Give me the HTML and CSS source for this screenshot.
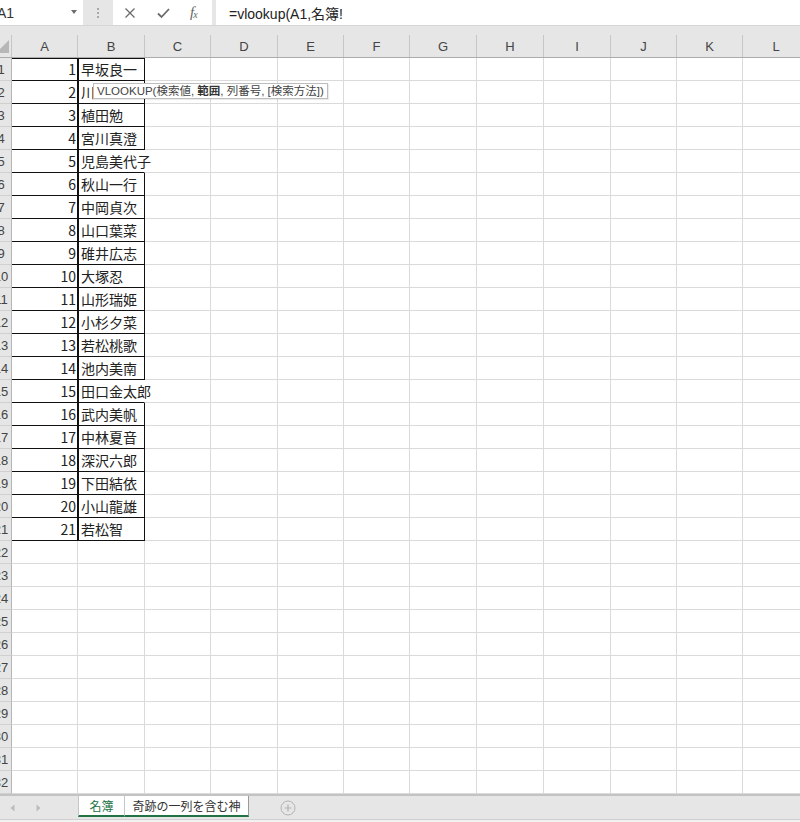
FILE: index.html
```html
<!DOCTYPE html>
<html lang="ja">
<head>
<meta charset="utf-8">
<title>名簿</title>
<link rel="stylesheet" href="styles.css">
</head>
<body>
<div class="fbar">
  <div class="namebox"><span class="ref">A1</span><span class="caret"></span></div>
  <div class="grip"><span></span><span></span><span></span></div>
  <div class="fx-icons">
    <svg class="ico" width="12" height="12" viewBox="0 0 12 12"><path d="M1.5 1.5 L10.5 10.5 M10.5 1.5 L1.5 10.5" stroke="#6b6b6b" stroke-width="1.3" fill="none"/></svg>
    <svg class="ico" width="13" height="12" viewBox="0 0 13 12"><path d="M1 6.5 L4.5 10 L12 2" stroke="#6b6b6b" stroke-width="1.8" fill="none"/></svg>
    <span class="fx"><i>f</i><sub>x</sub></span>
  </div>
  <div class="formula">=vlookup(A1,名簿!</div>
</div>
<div class="band"></div>
<div class="sheet">
  <div class="row head">
    <div class="corner"><svg width="12" height="22" viewBox="0 0 12 22"><polygon points="9,5 9,18 -4,18" fill="#b7b7b7"/></svg></div>
    <div class="ch">A</div><div class="ch">B</div><div class="ch">C</div><div class="ch">D</div><div class="ch">E</div><div class="ch">F</div><div class="ch">G</div><div class="ch">H</div><div class="ch">I</div><div class="ch">J</div><div class="ch">K</div><div class="ch">L</div>
  </div>
  <div class="row"><div class="rh"><span>1</span></div><div class="c num b first">1</div><div class="c name b first">早坂良一</div><div class="c"></div><div class="c"></div><div class="c"></div><div class="c"></div><div class="c"></div><div class="c"></div><div class="c"></div><div class="c"></div><div class="c"></div><div class="c"></div></div>
  <div class="row"><div class="rh"><span>2</span></div><div class="c num b">2</div><div class="c name b">川</div><div class="c"></div><div class="c"></div><div class="c"></div><div class="c"></div><div class="c"></div><div class="c"></div><div class="c"></div><div class="c"></div><div class="c"></div><div class="c"></div></div>
  <div class="row"><div class="rh"><span>3</span></div><div class="c num b">3</div><div class="c name b">植田勉</div><div class="c"></div><div class="c"></div><div class="c"></div><div class="c"></div><div class="c"></div><div class="c"></div><div class="c"></div><div class="c"></div><div class="c"></div><div class="c"></div></div>
  <div class="row"><div class="rh"><span>4</span></div><div class="c num b">4</div><div class="c name b">宮川真澄</div><div class="c"></div><div class="c"></div><div class="c"></div><div class="c"></div><div class="c"></div><div class="c"></div><div class="c"></div><div class="c"></div><div class="c"></div><div class="c"></div></div>
  <div class="row"><div class="rh"><span>5</span></div><div class="c num b">5</div><div class="c name b over">児島美代子</div><div class="c"></div><div class="c"></div><div class="c"></div><div class="c"></div><div class="c"></div><div class="c"></div><div class="c"></div><div class="c"></div><div class="c"></div><div class="c"></div></div>
  <div class="row"><div class="rh"><span>6</span></div><div class="c num b">6</div><div class="c name b">秋山一行</div><div class="c"></div><div class="c"></div><div class="c"></div><div class="c"></div><div class="c"></div><div class="c"></div><div class="c"></div><div class="c"></div><div class="c"></div><div class="c"></div></div>
  <div class="row"><div class="rh"><span>7</span></div><div class="c num b">7</div><div class="c name b">中岡貞次</div><div class="c"></div><div class="c"></div><div class="c"></div><div class="c"></div><div class="c"></div><div class="c"></div><div class="c"></div><div class="c"></div><div class="c"></div><div class="c"></div></div>
  <div class="row"><div class="rh"><span>8</span></div><div class="c num b">8</div><div class="c name b">山口葉菜</div><div class="c"></div><div class="c"></div><div class="c"></div><div class="c"></div><div class="c"></div><div class="c"></div><div class="c"></div><div class="c"></div><div class="c"></div><div class="c"></div></div>
  <div class="row"><div class="rh"><span>9</span></div><div class="c num b">9</div><div class="c name b">碓井広志</div><div class="c"></div><div class="c"></div><div class="c"></div><div class="c"></div><div class="c"></div><div class="c"></div><div class="c"></div><div class="c"></div><div class="c"></div><div class="c"></div></div>
  <div class="row"><div class="rh"><span>10</span></div><div class="c num b">10</div><div class="c name b">大塚忍</div><div class="c"></div><div class="c"></div><div class="c"></div><div class="c"></div><div class="c"></div><div class="c"></div><div class="c"></div><div class="c"></div><div class="c"></div><div class="c"></div></div>
  <div class="row"><div class="rh"><span>11</span></div><div class="c num b">11</div><div class="c name b">山形瑞姫</div><div class="c"></div><div class="c"></div><div class="c"></div><div class="c"></div><div class="c"></div><div class="c"></div><div class="c"></div><div class="c"></div><div class="c"></div><div class="c"></div></div>
  <div class="row"><div class="rh"><span>12</span></div><div class="c num b">12</div><div class="c name b">小杉夕菜</div><div class="c"></div><div class="c"></div><div class="c"></div><div class="c"></div><div class="c"></div><div class="c"></div><div class="c"></div><div class="c"></div><div class="c"></div><div class="c"></div></div>
  <div class="row"><div class="rh"><span>13</span></div><div class="c num b">13</div><div class="c name b">若松桃歌</div><div class="c"></div><div class="c"></div><div class="c"></div><div class="c"></div><div class="c"></div><div class="c"></div><div class="c"></div><div class="c"></div><div class="c"></div><div class="c"></div></div>
  <div class="row"><div class="rh"><span>14</span></div><div class="c num b">14</div><div class="c name b">池内美南</div><div class="c"></div><div class="c"></div><div class="c"></div><div class="c"></div><div class="c"></div><div class="c"></div><div class="c"></div><div class="c"></div><div class="c"></div><div class="c"></div></div>
  <div class="row"><div class="rh"><span>15</span></div><div class="c num b">15</div><div class="c name b over">田口金太郎</div><div class="c"></div><div class="c"></div><div class="c"></div><div class="c"></div><div class="c"></div><div class="c"></div><div class="c"></div><div class="c"></div><div class="c"></div><div class="c"></div></div>
  <div class="row"><div class="rh"><span>16</span></div><div class="c num b">16</div><div class="c name b">武内美帆</div><div class="c"></div><div class="c"></div><div class="c"></div><div class="c"></div><div class="c"></div><div class="c"></div><div class="c"></div><div class="c"></div><div class="c"></div><div class="c"></div></div>
  <div class="row"><div class="rh"><span>17</span></div><div class="c num b">17</div><div class="c name b">中林夏音</div><div class="c"></div><div class="c"></div><div class="c"></div><div class="c"></div><div class="c"></div><div class="c"></div><div class="c"></div><div class="c"></div><div class="c"></div><div class="c"></div></div>
  <div class="row"><div class="rh"><span>18</span></div><div class="c num b">18</div><div class="c name b">深沢六郎</div><div class="c"></div><div class="c"></div><div class="c"></div><div class="c"></div><div class="c"></div><div class="c"></div><div class="c"></div><div class="c"></div><div class="c"></div><div class="c"></div></div>
  <div class="row"><div class="rh"><span>19</span></div><div class="c num b">19</div><div class="c name b">下田結依</div><div class="c"></div><div class="c"></div><div class="c"></div><div class="c"></div><div class="c"></div><div class="c"></div><div class="c"></div><div class="c"></div><div class="c"></div><div class="c"></div></div>
  <div class="row"><div class="rh"><span>20</span></div><div class="c num b">20</div><div class="c name b">小山龍雄</div><div class="c"></div><div class="c"></div><div class="c"></div><div class="c"></div><div class="c"></div><div class="c"></div><div class="c"></div><div class="c"></div><div class="c"></div><div class="c"></div></div>
  <div class="row"><div class="rh"><span>21</span></div><div class="c num b">21</div><div class="c name b">若松智</div><div class="c"></div><div class="c"></div><div class="c"></div><div class="c"></div><div class="c"></div><div class="c"></div><div class="c"></div><div class="c"></div><div class="c"></div><div class="c"></div></div>
  <div class="row"><div class="rh"><span>22</span></div><div class="c"></div><div class="c"></div><div class="c"></div><div class="c"></div><div class="c"></div><div class="c"></div><div class="c"></div><div class="c"></div><div class="c"></div><div class="c"></div><div class="c"></div><div class="c"></div></div>
  <div class="row"><div class="rh"><span>23</span></div><div class="c"></div><div class="c"></div><div class="c"></div><div class="c"></div><div class="c"></div><div class="c"></div><div class="c"></div><div class="c"></div><div class="c"></div><div class="c"></div><div class="c"></div><div class="c"></div></div>
  <div class="row"><div class="rh"><span>24</span></div><div class="c"></div><div class="c"></div><div class="c"></div><div class="c"></div><div class="c"></div><div class="c"></div><div class="c"></div><div class="c"></div><div class="c"></div><div class="c"></div><div class="c"></div><div class="c"></div></div>
  <div class="row"><div class="rh"><span>25</span></div><div class="c"></div><div class="c"></div><div class="c"></div><div class="c"></div><div class="c"></div><div class="c"></div><div class="c"></div><div class="c"></div><div class="c"></div><div class="c"></div><div class="c"></div><div class="c"></div></div>
  <div class="row"><div class="rh"><span>26</span></div><div class="c"></div><div class="c"></div><div class="c"></div><div class="c"></div><div class="c"></div><div class="c"></div><div class="c"></div><div class="c"></div><div class="c"></div><div class="c"></div><div class="c"></div><div class="c"></div></div>
  <div class="row"><div class="rh"><span>27</span></div><div class="c"></div><div class="c"></div><div class="c"></div><div class="c"></div><div class="c"></div><div class="c"></div><div class="c"></div><div class="c"></div><div class="c"></div><div class="c"></div><div class="c"></div><div class="c"></div></div>
  <div class="row"><div class="rh"><span>28</span></div><div class="c"></div><div class="c"></div><div class="c"></div><div class="c"></div><div class="c"></div><div class="c"></div><div class="c"></div><div class="c"></div><div class="c"></div><div class="c"></div><div class="c"></div><div class="c"></div></div>
  <div class="row"><div class="rh"><span>29</span></div><div class="c"></div><div class="c"></div><div class="c"></div><div class="c"></div><div class="c"></div><div class="c"></div><div class="c"></div><div class="c"></div><div class="c"></div><div class="c"></div><div class="c"></div><div class="c"></div></div>
  <div class="row"><div class="rh"><span>30</span></div><div class="c"></div><div class="c"></div><div class="c"></div><div class="c"></div><div class="c"></div><div class="c"></div><div class="c"></div><div class="c"></div><div class="c"></div><div class="c"></div><div class="c"></div><div class="c"></div></div>
  <div class="row"><div class="rh"><span>31</span></div><div class="c"></div><div class="c"></div><div class="c"></div><div class="c"></div><div class="c"></div><div class="c"></div><div class="c"></div><div class="c"></div><div class="c"></div><div class="c"></div><div class="c"></div><div class="c"></div></div>
  <div class="row"><div class="rh"><span>32</span></div><div class="c"></div><div class="c"></div><div class="c"></div><div class="c"></div><div class="c"></div><div class="c"></div><div class="c"></div><div class="c"></div><div class="c"></div><div class="c"></div><div class="c"></div><div class="c"></div></div>
  <div class="tip">VLOOKUP(検索値, <b>範囲</b>, 列番号, [検索方法])</div>
</div>
<div class="tabbar">
  <div class="nav">
    <svg width="5" height="8" viewBox="0 0 5 8"><polygon points="4.5,0.5 4.5,7.5 0.5,4" fill="#bcbcbc"/></svg>
    <svg width="5" height="8" viewBox="0 0 5 8"><polygon points="0.5,0.5 0.5,7.5 4.5,4" fill="#bcbcbc"/></svg>
  </div>
  <div class="tab active">名簿</div>
  <div class="tab second">奇跡の一列を含む神</div>
  <div class="add"><svg width="16" height="16" viewBox="0 0 16 16"><circle cx="8" cy="8" r="7" fill="none" stroke="#b3b3b3" stroke-width="1"/><path d="M8 4.5 V11.5 M4.5 8 H11.5" stroke="#b3b3b3" stroke-width="1.2"/></svg></div>
</div>
<div class="status"></div>
</body>
</html>
```

FILE: styles.css
```css
* { box-sizing: border-box; margin: 0; padding: 0; }
html, body { width: 800px; height: 822px; overflow: hidden; background: #fff; }
body { font-family: "Liberation Sans", "Noto Sans CJK JP", sans-serif; color: #222; }

/* formula bar */
.fbar { height: 26px; background: #e6e6e6; display: flex; border-bottom: 1px solid #d6d6d6; }
.namebox { width: 83px; height: 25px; background: #fff; display: flex; align-items: center; justify-content: space-between; padding-right: 6px; }
.namebox .ref { font-size: 14px; color: #333; margin-left: -3px; }
.caret { width: 0; height: 0; border-left: 3.5px solid transparent; border-right: 3.5px solid transparent; border-top: 4px solid #6e6e6e; margin-top: -2px; }
.grip { width: 30px; height: 25px; display: flex; flex-direction: column; align-items: center; justify-content: center; gap: 2px; }
.grip span { width: 2px; height: 2px; background: #a8a8a8; }
.fx-icons { width: 99px; height: 25px; background: #fff; display: flex; align-items: center; padding-left: 11px; gap: 21px; }
.fx { font-family: "Liberation Serif", serif; color: #666; font-size: 15px; line-height: 1; display: flex; align-items: baseline; margin-left: -1px; }
.fx i { font-style: italic; }
.fx sub { font-size: 10px; font-style: italic; vertical-align: baseline; position: relative; top: 1px; margin-left: -1px; }
.formula { flex: 1; height: 25px; margin-left: 4px; background: #fff; padding-left: 13px; display: flex; align-items: center; font-size: 14px; color: #222; }
.band { height: 9px; background: #e6e6e6; }

/* sheet grid */
.sheet { position: relative; }
.row { display: grid; grid-template-columns: 12px 66px 67px 66px 67px 66px 66px 67px 67px 67px 66px 66px 67px; height: 23px; }
.head { background: #e6e6e6; border-bottom: 1px solid #ababab; height: 23px; }
.corner { border-right: 1px solid #c6c6c6; overflow: hidden; }
.corner svg { display: block; }
.ch { border-right: 1px solid #c6c6c6; display: flex; align-items: center; justify-content: center; font-size: 13px; color: #444; padding-top: 1px; }
.rh { background: #e6e6e6; border-right: 1px solid #b5b5b5; border-bottom: 1px solid #d0d0d0; overflow: hidden; display: flex; align-items: center; }
.rh span { flex-shrink: 0; width: 22px; margin-left: -10px; text-align: center; font-size: 13px; color: #444; }
.c { border-right: 1px solid #dadada; border-bottom: 1px solid #dadada; display: flex; align-items: center; white-space: nowrap; min-width: 0; }
.c.b { border-bottom-color: #111; border-right-color: #111; }
.c.first { box-shadow: inset 0 1px 0 #111; }
.num { justify-content: flex-end; padding-right: 1px; font-size: 14px; color: #222; font-family: "Noto Sans CJK JP", sans-serif; }
.name { padding-left: 3px; font-size: 14px; color: #222; font-family: "Noto Sans CJK JP", sans-serif; box-shadow: inset 1px 0 0 #111; overflow: visible; position: relative; z-index: 1; }
.name.first { box-shadow: inset 1px 0 0 #111, inset 0 1px 0 #111; }
.name.over { border-right-color: transparent; }

.tip { position: absolute; left: 93px; top: 48px; height: 16px; padding: 0 3px; background: #fff; border: 1px solid #bdbdbd; box-shadow: 1px 1px 1px rgba(0,0,0,0.08); font-size: 11.5px; color: #444; line-height: 14px; white-space: nowrap; z-index: 3; font-family: "Liberation Sans", "Noto Sans CJK JP", sans-serif; }
.tip b { font-weight: bold; color: #333; }

/* sheet tabs */
.tabbar { height: 25px; background: #e6e6e6; border-top: 2px solid #c3c3c3; display: flex; align-items: flex-start; }
.nav { width: 78px; height: 23px; display: flex; align-items: center; padding-left: 10px; gap: 21px; }
.nav svg { display: block; }
.tab { height: 21px; background: #fff; border-bottom: 2px solid #217346; display: flex; align-items: center; justify-content: center; font-family: "Noto Sans CJK JP", sans-serif; font-size: 12px; }
.tab.active { width: 46px; color: #217346; border-left: 1px solid #c6c6c6; }
.tab.second { width: 125px; color: #333; border-left: 1px solid #c6c6c6; border-right: 1px solid #9a9a9a; }
.add { height: 23px; display: flex; align-items: center; margin-left: 31px; }
.add svg { display: block; }
.status { height: 3px; background: #f2f2f2; border-top: 1px solid #cfcfcf; }
```
